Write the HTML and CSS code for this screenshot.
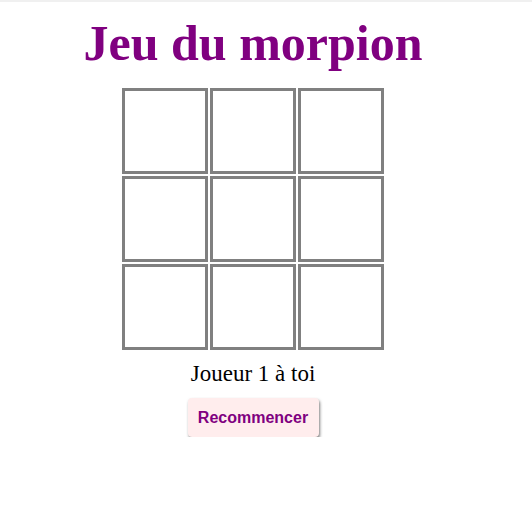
FILE: index.html
```html
<!DOCTYPE html>
<html lang="fr">
<head>
<meta charset="utf-8">
<title>Jeu du morpion</title>
<link rel="stylesheet" href="styles.css">
</head>
<body>
<div class="strip"></div>
<main class="game">
  <h1 class="title">Jeu du morpion</h1>
  <div class="board">
    <div class="cell"></div><div class="cell"></div><div class="cell"></div>
    <div class="cell"></div><div class="cell"></div><div class="cell"></div>
    <div class="cell"></div><div class="cell"></div><div class="cell"></div>
  </div>
  <p class="status">Joueur 1 à toi</p>
  <button class="restart">Recommencer</button>
</main>
</body>
</html>
```
FILE: styles.css
```css
html, body {
  margin: 0;
  padding: 0;
  background: #ffffff;
}
.strip {
  height: 2px;
  background: #f0f0f0;
}
.game {
  width: 506px;
  display: flex;
  flex-direction: column;
  align-items: center;
  font-family: "Liberation Serif", "Times New Roman", serif;
}
.title {
  margin: 13px 0 0 0;
  font-size: 50px;
  line-height: 56px;
  font-weight: bold;
  color: #800080;
}
.board {
  margin-top: 17px;
  display: grid;
  grid-template-columns: repeat(3, 86px);
  grid-auto-rows: 86px;
  gap: 2px;
}
.cell {
  box-sizing: border-box;
  border: 3px solid #808080;
  background: #ffffff;
}
.status {
  margin: 10px 0 0 0;
  font-size: 23px;
  line-height: 28px;
  color: #000000;
}
.restart {
  margin-top: 10px;
  width: 131px;
  height: 39px;
  padding: 0;
  border: none;
  border-radius: 4px;
  background: #ffeded;
  box-shadow: 1px 2px 3px rgba(0, 0, 0, 0.5);
  font-family: "Liberation Sans", Arial, sans-serif;
  font-size: 16px;
  font-weight: bold;
  color: #800080;
}
```
